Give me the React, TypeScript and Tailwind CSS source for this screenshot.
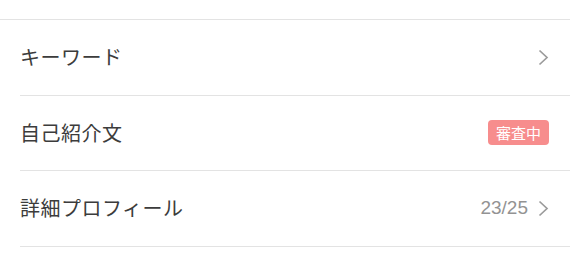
import React from 'react';

type Row = {
  label: string;
  badge?: string;
  count?: string;
  chevron?: boolean;
};

const rows: Row[] = [
  { label: 'キーワード', chevron: true },
  { label: '自己紹介文', badge: '審査中' },
  { label: '詳細プロフィール', count: '23/25', chevron: true },
];

function Chevron() {
  return (
    <svg width="11" height="17" viewBox="0 0 11 17" fill="none" className="text-[#9b9b9b]">
      <path d="M1.5 1.5 L9 8.5 L1.5 15.5" stroke="currentColor" strokeWidth="1.7" />
    </svg>
  );
}

export default function App() {
  return (
    <div
      className="w-[570px] h-[268px] bg-white pt-[19px] overflow-hidden"
      style={{ fontFamily: '"Noto Sans CJK JP", "Noto Sans", sans-serif' }}
    >
      <div className="border-t border-[#e3e3e3]">
        {rows.map((row) => (
          <div key={row.label} className="ml-5 h-[75.5px] border-b border-[#e3e3e3] flex items-center pr-[21px]">
            <span className="flex-1 text-[20px] text-[#3c3c3c] tracking-[0.5px]">{row.label}</span>
            {row.badge && (
              <span className="bg-[#f78d8d] text-white text-[15px] leading-none rounded-[4px] px-[8px] py-[5px]">
                {row.badge}
              </span>
            )}
            {row.count && (
              <span
                className="text-[19px] text-[#939393] mr-[10px]"
                style={{ fontFamily: '"Liberation Sans", Arial, sans-serif' }}
              >
                {row.count}
              </span>
            )}
            {row.chevron && <Chevron />}
          </div>
        ))}
      </div>
    </div>
  );
}
